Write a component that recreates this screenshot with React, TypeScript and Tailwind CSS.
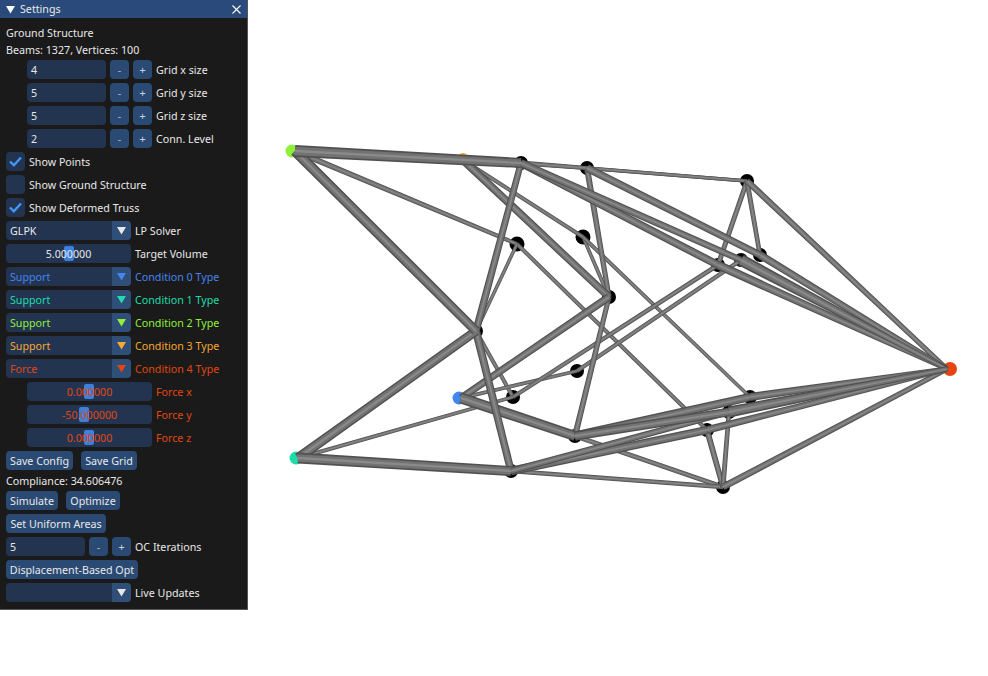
import type { ReactNode } from 'react';

type Pt = [number, number];

const nodes: Record<string, Pt> = {
  A: [295, 151], B: [463, 160], C: [521, 163], D: [587, 168], E: [747, 181],
  F: [517, 244], G: [583, 237], H: [609, 297], I: [476, 331], J: [718, 265],
  K: [741, 260], L: [760, 255], M: [947, 369], N: [461, 398], O: [513, 397],
  P: [577, 371], Q: [298, 458], R: [575, 436], S: [511, 471], T: [707, 430],
  U: [729, 412], V: [750, 397], W: [723, 487],
};

const colored = new Set(['A', 'B', 'M', 'N', 'Q']);

// from, to, width at from, width at to
const beams: [string, string, number, number][] = [
  ['C', 'E', 3.5, 3.5], ['D', 'E', 3.5, 3.5], ['B', 'G', 4, 4], ['A', 'F', 6, 4], ['G', 'H', 3.5, 4],
  ['F', 'T', 4, 4], ['G', 'V', 4, 3.5], ['I', 'F', 3.5, 3.5], ['I', 'O', 4, 4], ['Q', 'O', 4, 3.5],
  ['N', 'P', 4, 3.5], ['J', 'O', 4.5, 4], ['K', 'P', 4.5, 4], ['R', 'W', 5, 4.5], ['S', 'W', 4.5, 4.5],
  ['D', 'H', 6, 5], ['H', 'R', 5, 6], ['B', 'H', 8, 7.5], ['H', 'N', 8, 7], ['N', 'R', 11, 10],
  ['I', 'C', 7.5, 6.5], ['I', 'S', 8, 7.5], ['I', 'Q', 9.5, 10], ['A', 'I', 10.5, 9.5], ['C', 'D', 5, 4],
  ['E', 'J', 5, 5], ['E', 'L', 5, 4.5], ['E', 'M', 6.5, 5], ['T', 'W', 6, 5.5], ['W', 'U', 5, 4.5],
  ['W', 'M', 7, 5], ['D', 'L', 8, 7], ['C', 'J', 8, 8], ['L', 'M', 8, 5], ['J', 'M', 9, 5],
  ['C', 'K', 7.5, 6.5], ['K', 'M', 12, 4],
  ['S', 'T', 8.5, 8], ['S', 'U', 6.5, 6], ['R', 'V', 9, 8], ['R', 'U', 9, 8.5],
  ['T', 'M', 7.5, 5], ['V', 'M', 8, 5], ['U', 'M', 11, 5],
  ['Q', 'S', 11, 10], ['A', 'C', 12, 10],
];

function taper(a: Pt, b: Pt, wa: number, wb: number) {
  const dx = b[0] - a[0];
  const dy = b[1] - a[1];
  const len = Math.hypot(dx, dy);
  const nx = -dy / len;
  const ny = dx / len;
  return [
    [a[0] + (nx * wa) / 2, a[1] + (ny * wa) / 2],
    [b[0] + (nx * wb) / 2, b[1] + (ny * wb) / 2],
    [b[0] - (nx * wb) / 2, b[1] - (ny * wb) / 2],
    [a[0] - (nx * wa) / 2, a[1] - (ny * wa) / 2],
  ]
    .map((p) => p.join(','))
    .join(' ');
}

function Truss() {
  return (
    <svg viewBox="248 0 740 676" className="h-[676px] w-[740px] shrink-0">
      {Object.entries(nodes)
        .filter(([k]) => !colored.has(k))
        .map(([k, p]) => (
          <circle key={k} cx={p[0]} cy={p[1]} r={k === 'F' || k === 'G' ? 7.5 : 7} fill="#000" />
        ))}
      <circle cx={292} cy={151} r={6.5} fill="#8ff03a" />
      <circle cx={463} cy={158} r={5} fill="#f5a833" />
      <circle cx={950} cy={369} r={7} fill="#e6450f" />
      <circle cx={459} cy={398} r={6.5} fill="#4287f0" />
      <circle cx={296} cy={458} r={6.5} fill="#1fdcab" />
      {beams.map(([f, t, wa, wb], i) => {
        const a = nodes[f];
        const b = nodes[t];
        return (
          <g key={i}>
            <polygon points={taper(a, b, wa, wb)} fill="#505050" />
            <polygon points={taper(a, b, wa * 0.7, wb * 0.7)} fill="#727272" />
            <polygon points={taper(a, b, wa * 0.22, wb * 0.22)} fill="#8a8a8a" />
          </g>
        );
      })}
    </svg>
  );
}

const Arrow = ({ className }: { className: string }) => (
  <svg viewBox="0 0 10 10" className={className}>
    <polygon points="0,1 10,1 5,9.5" fill="currentColor" />
  </svg>
);

const Row = ({ children }: { children: ReactNode }) => <div className="flex h-[19px] items-center">{children}</div>;

const Text = ({ children }: { children: ReactNode }) => <div className="h-[13px] whitespace-nowrap leading-[15px]">{children}</div>;

const Btn = ({ label, className = '' }: { label: string; className?: string }) => (
  <div className={`flex h-[19px] items-center justify-center whitespace-nowrap rounded-[4px] bg-[#2a4a74] pt-[2px] ${className}`}>{label}</div>
);

function IntInput({ value, label, wide }: { value: string; label: string; wide?: boolean }) {
  return (
    <Row>
      <div className={wide ? 'w-0' : 'w-[21px]'} />
      <div className="flex h-[19px] w-[79px] items-center rounded-[4px] bg-[#233450] pl-[4px] pt-[2px]">{value}</div>
      <Btn label="-" className="ml-[4px] w-[19px] text-[#a9b7c9]" />
      <Btn label="+" className="ml-[4px] w-[19px] text-[#c9d3df]" />
      <span className="ml-[4px] pt-[2px]">{label}</span>
    </Row>
  );
}

function Check({ on, label }: { on: boolean; label: string }) {
  return (
    <Row>
      <div className="flex h-[19px] w-[19px] items-center justify-center rounded-[4px] bg-[#233450]">
        {on && (
          <svg viewBox="0 0 13 11" className="h-[11px] w-[13px]">
            <path d="M1 5.5 L4.8 9.2 L12 1.5" fill="none" stroke="#4296fa" strokeWidth="2.4" />
          </svg>
        )}
      </div>
      <span className="ml-[4px] pt-[2px]">{label}</span>
    </Row>
  );
}

function Combo({ value, label, color }: { value: string; label: string; color: string }) {
  return (
    <Row>
      <div className={`flex h-[19px] w-[125px] overflow-hidden rounded-[4px] bg-[#233450] ${color}`}>
        <span className="flex-1 pl-[4px] leading-[21px]">{value}</span>
        <div className="flex w-[19px] items-center justify-center bg-[#2f4e78]">
          <Arrow className="h-[9px] w-[9px]" />
        </div>
      </div>
      <span className={`ml-[4px] pt-[2px] ${color}`}>{label}</span>
    </Row>
  );
}

function Slider({ value, label, grab, indent, color }: { value: string; label: string; grab: number; indent?: boolean; color: string }) {
  return (
    <Row>
      {indent && <div className="w-[21px]" />}
      <div className={`relative flex h-[19px] w-[125px] items-center justify-center rounded-[4px] bg-[#233450] ${color}`}>
        <div className="absolute top-[2px] h-[15px] w-[10px] rounded-[2px] bg-[#3d7fdc]" style={{ left: grab }} />
        <span className="relative pt-[2px]">{value}</span>
      </div>
      <span className={`ml-[4px] pt-[2px] ${color}`}>{label}</span>
    </Row>
  );
}

const conditions = [
  ['Support', 'Condition 0 Type', 'text-[#4585ee]'],
  ['Support', 'Condition 1 Type', 'text-[#1fdcab]'],
  ['Support', 'Condition 2 Type', 'text-[#8fef3a]'],
  ['Support', 'Condition 3 Type', 'text-[#f5a833]'],
  ['Force', 'Condition 4 Type', 'text-[#e0470f]'],
];

export default function App() {
  return (
    <div className="flex h-[676px] w-[988px] overflow-hidden bg-white font-['Noto_Sans',sans-serif] text-[10.7px] leading-[15px] text-[#e8e8e8]">
      <div className="h-[610px] w-[248px] shrink-0 border-r border-b border-[#555] bg-[#1a1a1a]">
        <div className="flex h-[18px] items-center bg-[#294a7a] pl-[6px] pr-[6px]">
          <Arrow className="h-[9px] w-[9px] text-white" />
          <span className="ml-[5px] flex-1">Settings</span>
          <svg viewBox="0 0 9 9" className="h-[9px] w-[9px]">
            <path d="M0.5 0.5 L8.5 8.5 M8.5 0.5 L0.5 8.5" stroke="#fff" strokeWidth="1.1" />
          </svg>
        </div>
        <div className="flex flex-col gap-[4px] pl-[6px] pt-[8px]">
          <Text>Ground Structure</Text>
          <Text>Beams: 1327, Vertices: 100</Text>
          <IntInput value="4" label="Grid x size" />
          <IntInput value="5" label="Grid y size" />
          <IntInput value="5" label="Grid z size" />
          <IntInput value="2" label="Conn. Level" />
          <Check on label="Show Points" />
          <Check on={false} label="Show Ground Structure" />
          <Check on label="Show Deformed Truss" />
          <Combo value="GLPK" label="LP Solver" color="text-[#e8e8e8]" />
          <Slider value="5.000000" label="Target Volume" grab={58} color="text-[#e8e8e8]" />
          {conditions.map(([v, l, c]) => (
            <Combo key={l} value={v} label={l} color={c} />
          ))}
          <Slider indent value="0.000000" label="Force x" grab={57} color="text-[#e0470f]" />
          <Slider indent value="-50.000000" label="Force y" grab={52} color="text-[#e0470f]" />
          <Slider indent value="0.000000" label="Force z" grab={57} color="text-[#e0470f]" />
          <Row>
            <Btn label="Save Config" className="w-[67px]" />
            <Btn label="Save Grid" className="ml-[8px] w-[56px]" />
          </Row>
          <Text>Compliance: 34.606476</Text>
          <Row>
            <Btn label="Simulate" className="w-[52px]" />
            <Btn label="Optimize" className="ml-[8px] w-[54px]" />
          </Row>
          <Row>
            <Btn label="Set Uniform Areas" className="w-[100px]" />
          </Row>
          <IntInput wide value="5" label="OC Iterations" />
          <Row>
            <Btn label="Displacement-Based Opt" className="w-[132px]" />
          </Row>
          <Combo value="" label="Live Updates" color="text-[#e8e8e8]" />
        </div>
      </div>
      <Truss />
    </div>
  );
}
